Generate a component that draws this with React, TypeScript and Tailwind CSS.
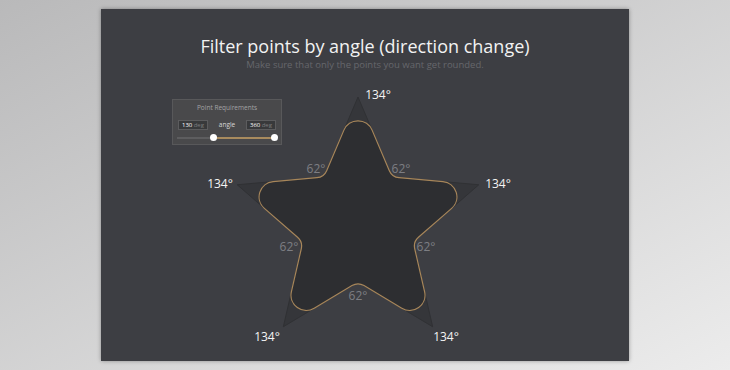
import React from 'react';

type Pt = { x: number; y: number };

// star vertices, outer first at the top, going clockwise
const starPoints = (cx: number, cy: number, R: number, r: number): Pt[] => {
  const pts: Pt[] = [];
  for (let i = 0; i < 10; i++) {
    const a = ((-90 + i * 36) * Math.PI) / 180;
    const rad = i % 2 === 0 ? R : r;
    pts.push({ x: cx + rad * Math.cos(a), y: cy + rad * Math.sin(a) });
  }
  return pts;
};

const sharpPath = (pts: Pt[]) =>
  pts.map((p, i) => `${i === 0 ? 'M' : 'L'}${p.x.toFixed(2)} ${p.y.toFixed(2)}`).join(' ') + ' Z';

const roundedPath = (pts: Pt[], outerD: number, innerD: number) => {
  const n = pts.length;
  let d = '';
  pts.forEach((v, i) => {
    const prev = pts[(i - 1 + n) % n];
    const next = pts[(i + 1) % n];
    const ux = prev.x - v.x, uy = prev.y - v.y;
    const wx = next.x - v.x, wy = next.y - v.y;
    const lu = Math.hypot(ux, uy), lw = Math.hypot(wx, wy);
    const dist = i % 2 === 0 ? outerD : innerD;
    const a = { x: v.x + (ux / lu) * dist, y: v.y + (uy / lu) * dist };
    const b = { x: v.x + (wx / lw) * dist, y: v.y + (wy / lw) * dist };
    const phi = Math.acos((ux * wx + uy * wy) / (lu * lw));
    const rho = dist * Math.tan(phi / 2);
    const sweep = i % 2 === 0 ? 1 : 0;
    d += `${i === 0 ? 'M' : 'L'}${a.x.toFixed(2)} ${a.y.toFixed(2)} A${rho.toFixed(2)} ${rho.toFixed(2)} 0 0 ${sweep} ${b.x.toFixed(2)} ${b.y.toFixed(2)} `;
  });
  return d + 'Z';
};

// coordinates are relative to the drawing area (page x - 101, page y - 72)
const pts = starPoints(257, 153, 127, 58);

const outerLabels = [
  { x: 277, y: 25 },
  { x: 397, y: 114 },
  { x: 345, y: 267 },
  { x: 166, y: 267 },
  { x: 119, y: 114 },
];

const innerLabels = [
  { x: 300, y: 99 },
  { x: 325, y: 177 },
  { x: 257, y: 226 },
  { x: 188, y: 177 },
  { x: 215, y: 99 },
];

const SettingsBox: React.FC = () => (
  <div className="absolute left-[71px] top-[90px] w-[110px] h-[46px] bg-[#49494b] border border-[#58585a] px-[4px] pt-[3px]">
    <div className="text-center text-[6.5px] leading-[10px] text-[#a3a3a5]">Point Requirements</div>
    <div className="flex items-center justify-between mt-[7px] px-[1px]">
      <div className="flex items-center w-[30px] h-[10px] bg-[#38393b] border border-[#5c5c5e] text-[6px] leading-none">
        <span className="text-white pl-[3px]">130</span>
        <span className="text-[#7b7b7d] ml-auto pr-[3px]">deg</span>
      </div>
      <span className="text-[6.5px] text-[#d8d8d8] leading-none">angle</span>
      <div className="flex items-center w-[30px] h-[10px] bg-[#38393b] border border-[#5c5c5e] text-[6px] leading-none">
        <span className="text-white pl-[3px]">360</span>
        <span className="text-[#7b7b7d] ml-auto pr-[3px]">deg</span>
      </div>
    </div>
    <div className="relative mt-[5px] h-[6px]">
      <div className="absolute left-0 right-0 top-[2px] h-[2px] bg-[#5d5d5f]" />
      <div className="absolute left-[37px] right-[2px] top-[2px] h-[2px] bg-[#a88b5e]" />
      <div className="absolute left-[33px] top-[-1px] w-[7px] h-[7px] rounded-full bg-white" />
      <div className="absolute right-[-1px] top-[-1px] w-[7px] h-[7px] rounded-full bg-white" />
    </div>
  </div>
);

const App: React.FC = () => {
  return (
    <div
      className="w-[730px] h-[370px] pt-[9px] pl-[101px] bg-gradient-to-br from-[#b9b9ba] to-[#ececec]"
      style={{ fontFamily: '"Open Sans", "Noto Sans", sans-serif' }}
    >
      <div className="relative w-[528px] h-[352px] bg-[#3d3e43] shadow-[0_0_4px_rgba(0,0,0,0.35)] flex flex-col items-center">
        <h1 className="mt-[26px] text-[18px] leading-[23px] text-[#f2f2f2] font-normal">
          Filter points by angle (direction change)
        </h1>
        <p className="mt-[1px] text-[9.5px] leading-[12px] text-[#66676c]">
          Make sure that only the points you want get rounded.
        </p>
        <svg className="w-[528px] h-[289px]" viewBox="0 0 528 289">
          <path d={sharpPath(pts)} fill="#35363a" stroke="#303134" strokeWidth={1} />
          <path d={roundedPath(pts, 36, 7)} fill="#2d2e31" stroke="#a7865a" strokeWidth={1.2} />
          {outerLabels.map((l, i) => (
            <text key={i} x={l.x} y={l.y} textAnchor="middle" dominantBaseline="middle" fontSize={12} fill="#f4f4f4">
              134°
            </text>
          ))}
          {innerLabels.map((l, i) => (
            <text key={i} x={l.x} y={l.y} textAnchor="middle" dominantBaseline="middle" fontSize={12} fill="#7d7e83">
              62°
            </text>
          ))}
        </svg>
        <SettingsBox />
      </div>
    </div>
  );
};

export default App;
